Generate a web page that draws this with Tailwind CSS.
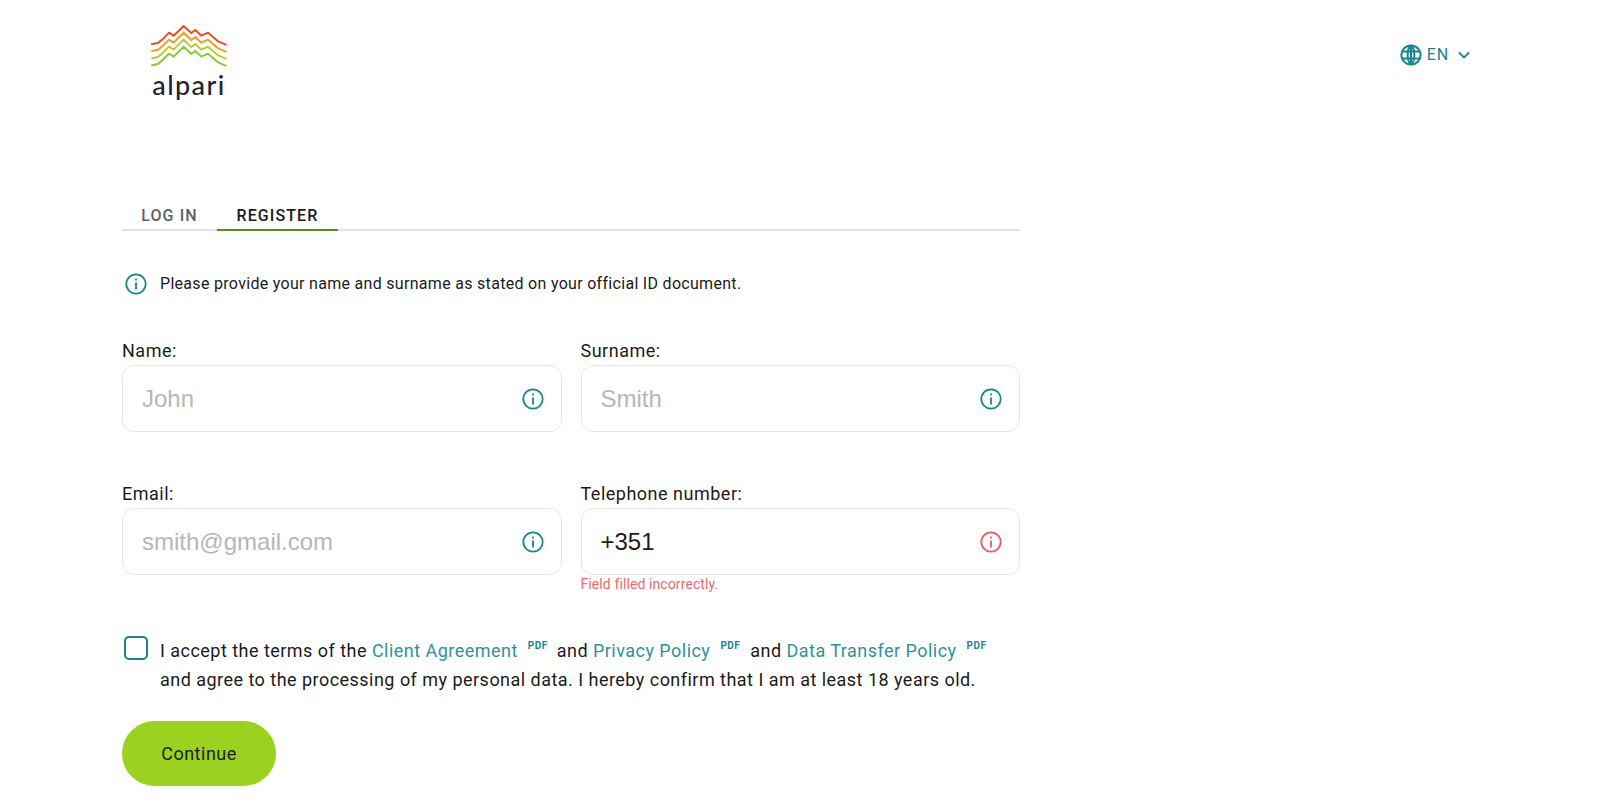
<!DOCTYPE html>
<html lang="en">
<head>
    <meta charset="UTF-8">
    <title>Alpari - Register</title>
    <script src="https://cdn.jsdelivr.net/npm/@tailwindcss/browser@4"></script>
</head>
<body class="bg-white font-['Roboto',sans-serif] text-[#1b1b1b] h-[806px] overflow-hidden">
    <header class="flex justify-between pl-[151px] pr-[130px] h-[197px]">
        <div class="flex flex-col items-center w-[76px] pt-[24px]">
            <svg class="w-[76px] h-[44px]" viewBox="64 44 228 130" fill="none" stroke-width="6" stroke-linejoin="round" stroke-linecap="round">
                <path stroke="#f04b23" d="M67 103 L85 100 L102 86 L118 69 L132 78 L162 49 L185 70 L197 61 L215 78 L235 69 L265 95 L288 105"/>
                <path stroke="#f59a23" d="M67 124 L85 120 L102 106 L118 90 L132 99 L162 69 L185 91 L197 82 L215 99 L235 90 L265 116 L288 126"/>
                <path stroke="#c2c92d" d="M67 146 L85 142 L102 127 L118 111 L132 120 L162 90 L185 112 L197 103 L215 120 L235 111 L265 137 L288 147"/>
                <path stroke="#8cc63f" d="M67 167 L85 163 L102 148 L118 132 L132 141 L162 111 L185 133 L197 124 L215 141 L235 132 L265 158 L288 168"/>
            </svg>
            <span class="font-['Lato',sans-serif] font-medium text-[27px] leading-[28px] tracking-[1.4px] text-[#1d2733] mt-[3px]">alpari</span>
        </div>
        <div class="flex items-center gap-[5px] h-[28px] mt-[41px] text-[#17868f]">
            <svg class="w-[22px] h-[22px] mt-[-1px]" viewBox="0 0 22 22" fill="none" stroke="currentColor" stroke-width="2">
                <circle cx="11" cy="11" r="9.6"/>
                <path d="M11 1.400v19.200M2.600 7.500h16.800M2.600 14.500h16.800M11 1.400C6.500 5 6.500 17 11 20.600M11 1.400c4.500 3.600 4.500 15.600 0 19.200"/>
            </svg>
            <span class="text-[16px] tracking-[0.9px]">EN</span>
            <svg class="w-[12px] h-[8px] ml-[4px]" viewBox="0 0 12 8" fill="none" stroke="currentColor" stroke-width="1.8"><path d="M1 1.500l5 5 5-5"/></svg>
        </div>
    </header>

    <main class="ml-[122px] w-[898px]">
        <nav class="flex h-[34px] border-b-2 border-[#e3e3e3] text-[16px] tracking-[1.1px] leading-[38px]">
            <a class="w-[95px] h-[34px] text-center font-medium text-[#5a6268]">LOG IN</a>
            <a class="w-[121px] h-[34px] text-center font-medium text-[#1b1b1b] border-b-2 border-[#5c8a1e]">REGISTER</a>
        </nav>

        <div class="flex items-center gap-[13px] mt-[41px] pl-[3px] text-[16px] tracking-[0.3px] leading-[24px]">
            <svg class="w-[22px] h-[22px] text-[#17868f]" viewBox="0 0 22 22" fill="none" stroke="currentColor" stroke-width="1.8"><circle cx="11" cy="11" r="9.700"/><path d="M11 9.500v7M11 5.500v2"/></svg>
            <p>Please provide your name and surname as stated on your official ID document.</p>
        </div>

        <div class="grid grid-cols-2 gap-x-[19px] mt-[43px] text-[18px] tracking-[0.5px]">
            <div class="h-[143px]">
                <label class="block leading-[24px] h-[26px]">Name:</label>
                <div class="flex items-center justify-between h-[67px] pl-[19px] pr-[17px] border border-[#e6e6e6] rounded-[12px] font-['Liberation_Sans',sans-serif] tracking-normal text-[24px] text-[#b3b7ba]">
                    <span>John</span>
                    <svg class="w-[22px] h-[22px] text-[#17868f]" viewBox="0 0 22 22" fill="none" stroke="currentColor" stroke-width="1.8"><circle cx="11" cy="11" r="9.700"/><path d="M11 9.500v7M11 5.500v2"/></svg>
                </div>
            </div>
            <div class="h-[143px]">
                <label class="block leading-[24px] h-[26px]">Surname:</label>
                <div class="flex items-center justify-between h-[67px] pl-[19px] pr-[17px] border border-[#e6e6e6] rounded-[12px] font-['Liberation_Sans',sans-serif] tracking-normal text-[24px] text-[#b3b7ba]">
                    <span>Smith</span>
                    <svg class="w-[22px] h-[22px] text-[#17868f]" viewBox="0 0 22 22" fill="none" stroke="currentColor" stroke-width="1.8"><circle cx="11" cy="11" r="9.700"/><path d="M11 9.500v7M11 5.500v2"/></svg>
                </div>
            </div>
            <div>
                <label class="block leading-[24px] h-[26px]">Email:</label>
                <div class="flex items-center justify-between h-[67px] pl-[19px] pr-[17px] border border-[#e6e6e6] rounded-[12px] font-['Liberation_Sans',sans-serif] tracking-normal text-[24px] text-[#b3b7ba]">
                    <span>smith@gmail.com</span>
                    <svg class="w-[22px] h-[22px] text-[#17868f]" viewBox="0 0 22 22" fill="none" stroke="currentColor" stroke-width="1.8"><circle cx="11" cy="11" r="9.700"/><path d="M11 9.500v7M11 5.500v2"/></svg>
                </div>
            </div>
            <div>
                <label class="block leading-[24px] h-[26px]">Telephone number:</label>
                <div class="flex items-center justify-between h-[67px] pl-[19px] pr-[17px] border border-[#e6e6e6] rounded-[12px] font-['Liberation_Sans',sans-serif] tracking-normal text-[24px] text-[#1b1b1b]">
                    <span>+351</span>
                    <svg class="w-[22px] h-[22px] text-[#ee5a5f]" viewBox="0 0 22 22" fill="none" stroke="currentColor" stroke-width="1.8"><circle cx="11" cy="11" r="9.700"/><path d="M11 9.500v7M11 5.500v2"/></svg>
                </div>
                <p class="text-[14px] tracking-[0.1px] leading-[20px] mt-[-1px] text-[#f0686d]">Field filled incorrectly.</p>
            </div>
        </div>

        <div class="flex gap-[12px] mt-[42px] pl-[2px]">
            <div class="w-[24px] h-[24px] shrink-0 border-2 border-[#17868f] rounded-[5px]"></div>
            <p class="text-[18px] tracking-[0.47px] leading-[29px] mt-[0px]">
                I accept the terms of the <a class="text-[#2f9199]">Client Agreement</a><sup class="text-[10px] font-bold tracking-[0.5px] text-[#17868f] ml-[10px] mr-[9px] top-[-8px]">PDF</sup>and <a class="text-[#2f9199]">Privacy Policy</a><sup class="text-[10px] font-bold tracking-[0.5px] text-[#17868f] ml-[10px] mr-[10px] top-[-8px]">PDF</sup>and <a class="text-[#2f9199]">Data Transfer Policy</a><sup class="text-[10px] font-bold tracking-[0.5px] text-[#17868f] ml-[10px] top-[-8px]">PDF</sup><br>
                and agree to the processing of my personal data. I hereby confirm that I am at least 18 years old.
            </p>
        </div>

        <button class="block w-[154px] h-[65px] mt-[27px] rounded-full bg-[#9bd21f] text-[18px] tracking-[0.5px] text-[#1b1b1b]">Continue</button>
    </main>
</body>
</html>
